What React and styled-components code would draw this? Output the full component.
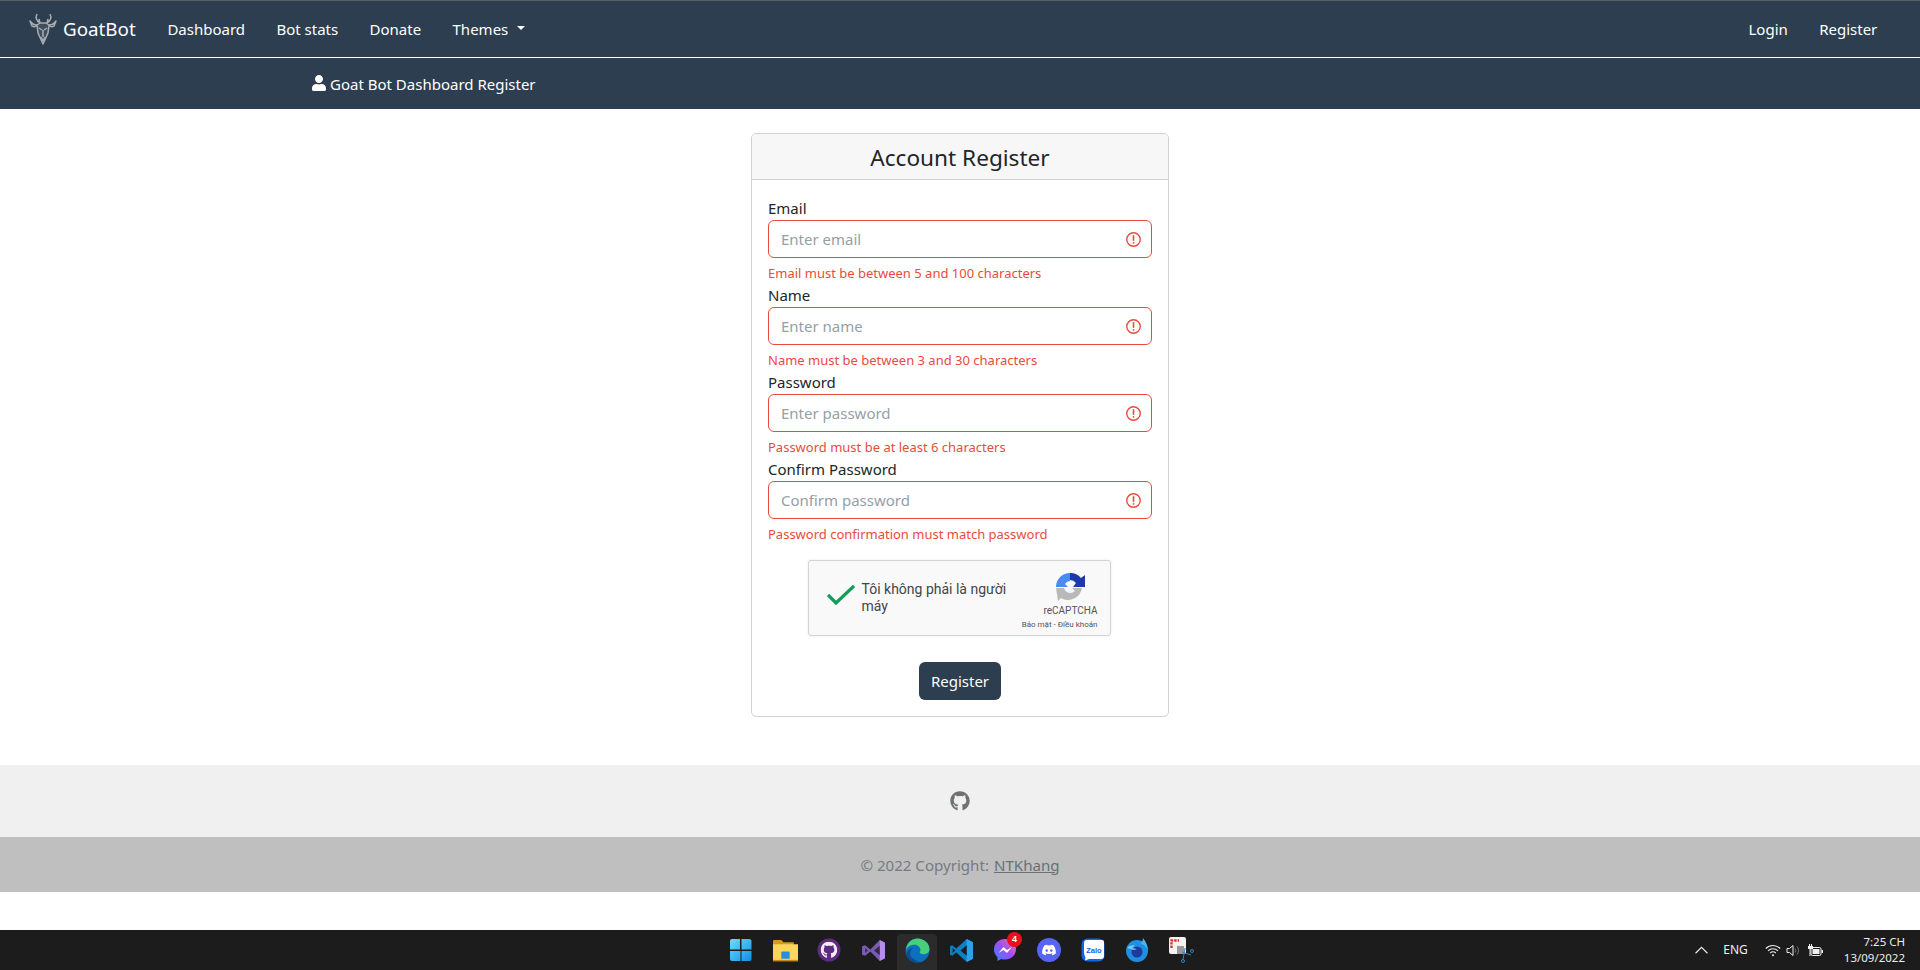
import React from 'react';
import styled, { createGlobalStyle } from 'styled-components';
import { FaUser, FaGithub, FaDiscord } from 'react-icons/fa';

const Global = createGlobalStyle`
  * { box-sizing: border-box; }
  html, body { margin: 0; padding: 0; background: #fff; }
  body { font-family: "Noto Sans", "Open Sans", sans-serif; font-size: 15px; line-height: 24px; color: #212529; }
`;

const Page = styled.div`display:flex;flex-direction:column;height:970px;overflow:hidden;`;
const Navbar = styled.nav`
  height:58px;background:#2c3e50;border-top:1px solid #5a5f63;border-bottom:1px solid #fff;
  display:flex;align-items:center;padding:0 27px 0 29px;color:#fff;
`;
const Brand = styled.a`display:flex;align-items:center;gap:6px;font-size:18.8px;margin-right:16px;`;
const NavLink = styled.a`padding:0 15.7px;color:#fff;white-space:nowrap;display:flex;align-items:center;`;
const Caret = styled.span`
  display:inline-block;margin-left:9px;border-top:4.8px solid #fff;border-left:4.8px solid transparent;border-right:4.8px solid transparent;margin-top:-3px;
`;
const Spacer = styled.div`flex:1;`;
const SubHeader = styled.header`
  height:51px;background:#2c3e50;color:#fff;display:flex;align-items:center;gap:4px;padding-left:312px;
  svg{width:14px;height:16px;margin-top:-2px;}
`;
const Main = styled.main`display:flex;justify-content:center;padding-top:24px;`;
const Card = styled.section`width:418px;border:1px solid #d2d2d2;border-radius:5px;height:584px;overflow:hidden;`;
const CardHeader = styled.h2`
  margin:0;height:46px;background:#f7f7f7;border-bottom:1px solid #d2d2d2;text-align:center;
  font-size:22.6px;font-weight:400;line-height:47px;color:#212529;
`;
const CardBody = styled.form`padding:16px;display:flex;flex-direction:column;`;
const Field = styled.div`display:flex;flex-direction:column;height:87px;`;
const Label = styled.label`height:24px;line-height:24px;`;
const InputWrap = styled.div`
  height:38px;border:1px solid #e74c3c;border-radius:6px;display:flex;align-items:center;justify-content:space-between;
  padding:0 10px 0 12px;color:#95a0a6;
`;
const Placeholder = styled.span``;
const Feedback = styled.div`margin-top:4px;height:21px;line-height:23px;font-size:13px;color:#e74c3c;`;
const Captcha = styled.div`
  align-self:center;margin:16px 0 0 -2px;width:303px;height:76px;background:#f9f9f9;border:1px solid #d3d3d3;border-radius:3px;
  box-shadow:0 0 3px rgba(0,0,0,.08);display:flex;font-family:Roboto,sans-serif;color:#444;
`;
const CaptchaCheck = styled.div`width:51px;padding:23px 0 0 18px;flex:none;`;
const CaptchaLabel = styled.div`width:170px;padding-top:20px;font-size:14px;line-height:17px;flex:none;margin-left:2px;`;
const CaptchaBrand = styled.div`flex:1;min-width:0;display:flex;flex-direction:column;align-items:flex-end;padding:10px 12px 0 0;`;
const LogoSlot = styled.div`margin-right:12px;height:31px;`;
const CaptchaName = styled.div`font-size:10px;line-height:12px;color:#555;margin-top:3px;`;
const CaptchaLinks = styled.div`font-size:8px;line-height:10px;color:#555;margin-top:3px;white-space:nowrap;`;
const SubmitRow = styled.div`display:flex;justify-content:center;margin-top:26px;`;
const Submit = styled.button`
  width:82px;height:38px;background:#2c3e50;color:#fff;border:0;border-radius:6px;font:inherit;padding:0;
`;
const Footer = styled.footer`margin-top:48px;`;
const Social = styled.div`height:72px;background:#f0f0f0;display:flex;align-items:center;justify-content:center;color:#6d7276;svg{width:20px;height:20px;}`;
const Copy = styled.div`height:55px;background:#bfbfbf;display:flex;align-items:center;justify-content:center;gap:5px;color:#757b80;font-size:15.1px;`;
const CopyLink = styled.a`color:#6a7075;text-decoration:underline;`;
const Taskbar = styled.div`
  margin-top:auto;height:40px;background:#1c1c1c;display:flex;align-items:center;position:relative;color:#fff;flex:none;
`;
const TaskIcons = styled.div`
  position:absolute;left:719px;top:0;height:40px;display:flex;
`;
const TaskIcon = styled.div`
  width:44px;height:40px;display:flex;align-items:center;justify-content:center;position:relative;
  ${p=>p.$active?`&::before{content:"";position:absolute;left:2px;right:2px;top:4px;bottom:0;background:#2b2b2b;border-radius:4px 4px 0 0;}`:''}
  svg{position:relative;}
`;
const Badge = styled.span`
  position:absolute;right:5px;top:2px;width:15px;height:15px;background:#e8101a;border-radius:50%;font:700 9px/15px "Liberation Sans",sans-serif;text-align:center;color:#fff;
`;
const Tray = styled.div`margin-left:auto;display:flex;align-items:center;padding-right:15px;font-family:"Noto Sans",sans-serif;font-size:11px;`;
const Lang = styled.span`margin:0 17px 0 15px;font-size:12px;color:#eee;`;
const TrayIcons = styled.div`display:flex;align-items:center;gap:5px;margin-right:21px;`;
const Clock = styled.div`text-align:right;line-height:16px;font-size:11.5px;color:#eee;`;

const GoatLogo = () => (
  <svg width="28" height="32" viewBox="0 0 28 32" fill="none" stroke="#a9adb1" strokeWidth="1.5" strokeLinejoin="round">
    <path d="M8 1c-2 4 0 7 3 9l-1-4M21 1c2 4 0 7-3 9l1-4" />
    <path d="M1 8c2 3 4 4 7 4-1 2-3 2-5 1zM27 8c-2 3-4 4-7 4 1 2 3 2 5 1z" />
    <path d="M8 12l3-2h6l3 2-1 8-5 11-5-11z" fill="#3f4f5f" />
    <path d="M10 15l3 2M18 15l-3 2M12 24l2 4 2-4M14 17v7" />
  </svg>
);
const Invalid = () => (
  <svg width="15" height="15" viewBox="0 0 12 12" fill="none" stroke="#e74c3c">
    <circle cx="6" cy="6" r="5.4" strokeWidth="1.1" />
    <path d="M6 3v3.600" strokeWidth="1.300" strokeLinecap="round" />
    <circle cx="6" cy="8.700" r=".7" fill="#e74c3c" stroke="none" />
  </svg>
);
const Check = () => (
  <svg width="28" height="21" viewBox="0 0 28 21" fill="none" stroke="#0f9d58" strokeWidth="3.200"><path d="M1 11l8 8L27 2" /></svg>
);
const RecaptchaLogo = () => (
  <svg width="31" height="31" viewBox="0 0 31 31" fill="none">
    <path d="M1 15A14 14 0 0 1 15 2v8a6 6 0 0 0-5 3l3 3H1z" fill="#4a8af4" />
    <path d="M15 2a14 14 0 0 1 11 5l4-3v12H18l3-4a8 8 0 0 0-6-3z" fill="#1c3aa9" />
    <path d="M1 17h8a7 7 0 0 0 6 5 7 7 0 0 0 5-2l-3-3h10A14 14 0 0 1 6 27L3 30z" fill="#b9b9b9" />
  </svg>
);

const Win = () => (
  <svg width="24" height="24" viewBox="0 0 24 24">
    <defs><linearGradient id="w" x1="0" y1="0" x2="1" y2="1"><stop offset="0" stopColor="#6fdcfb"/><stop offset="1" stopColor="#0f8ee6"/></linearGradient></defs>
    <path d="M1 3q0-2 2-2h8v10.500H1zM12.500 1h8q2 0 2 2v8.500H12.500zM1 13h10.500v10H3q-2 0-2-2zM12.500 13h10v8q0 2-2 2h-8z" fill="url(#w)"/>
  </svg>
);
const Folder = () => (
  <svg width="25" height="23" viewBox="0 0 24 22">
    <path d="M0 2q0-1 1-1h7l2 2h10v3H0z" fill="#d79a1c"/>
    <path d="M0 5h24v16H0z" fill="#f9d65c"/>
    <path d="M8 13q0-1 1-1h6q1 0 1 1v6H8z" fill="#2a8fd6"/>
    <path d="M0 20h24v1.500H0z" fill="#c68a18"/>
  </svg>
);
const GhIcon = () => (
  <svg width="24" height="24" viewBox="0 0 24 24"><circle cx="12" cy="12" r="11.500" fill="#5f2b80"/><FaGithub x="3.500" y="3.500" size="17" color="#f1eef5"/></svg>
);
const VS = () => (
  <svg width="25" height="25" viewBox="0 0 24 24"><path d="M1 8l3-1 5 4 9-9 5 2.500v15L18 22l-9-9-5 4-3-1z" fill="#7a5ab5"/><path d="M18 2l5 2.500v15L18 22z" fill="#b88fe8"/><path d="M4 9.500v5l2.500-2.500zM18 7.500L12.500 12l5.500 4.500z" fill="#1c1c1c" opacity=".75"/></svg>
);
const Edge = () => (
  <svg width="25" height="25" viewBox="0 0 24 24">
    <circle cx="12" cy="12" r="11.500" fill="#0c70bf"/>
    <path d="M1 11C2 4 7 .5 12 .5c6.500 0 11.500 5 11.500 10 0 3.500-3 5-6 5-2 0-3.500-.8-3.500-1.500 0-.5.800-.8.800-2.500 0-3-3-5-6-5-3.500 0-6 2-7.800 4.500z" fill="#47cf7b"/>
    <path d="M8 20c-4-2-4-8 0-10.500-3.500 0-6.500 3-6.500 6 0 4 4 8 10 8 1 0 2-.2 3-.5-2.500 0-4.500-1.500-6.500-3z" fill="#0a4d92"/>
  </svg>
);
const VSCode = () => (
  <svg width="25" height="25" viewBox="0 0 24 24"><path d="M17 1l6 3v16l-6 3L7 14l-4 3-2-1V8l2-1 4 3z" fill="#0f7fc4"/><path d="M17 1l6 3v16l-6 3z" fill="#2aa3ec"/><path d="M17 7l-6 5 6 5zM3.500 9.500v5L6 12z" fill="#1c1c1c"/></svg>
);
const Messenger = () => (
  <svg width="24" height="24" viewBox="0 0 24 24">
    <defs><linearGradient id="m" x1="0" y1="1" x2="1" y2="0"><stop offset="0" stopColor="#2f8cff"/><stop offset=".5" stopColor="#9a4dff"/><stop offset="1" stopColor="#ff6a8a"/></linearGradient></defs>
    <path d="M12 1C5.500 1 1 5.500 1 11.500c0 3 1.300 5.700 3.500 7.500v4l3.700-2c1.200.4 2.500.5 3.800.5 6.500 0 11-4.500 11-10.500S18.500 1 12 1z" fill="url(#m)"/>
    <path d="M5.500 15l5-6 3.500 3 5-3-5 6-3.500-3z" fill="#fff"/>
  </svg>
);
const Disc = () => (
  <svg width="24" height="24" viewBox="0 0 24 24"><circle cx="12" cy="12" r="12" fill="#5865f2"/><FaDiscord x="4.500" y="4.500" size="15" color="#fff"/></svg>
);
const Zalo = () => (
  <svg width="24" height="24" viewBox="0 0 24 24"><rect x=".5" y=".5" width="23" height="23" rx="6" fill="#0a68e8"/><path d="M3 5q0-3 3-3h15q2 0 2 2v14q0 3-3 3H8l-4 1.500.5-3Q3 17 3 14z" fill="#fff"/><text x="13" y="14.500" textAnchor="middle" fontSize="7.500" fontWeight="700" fontFamily="Liberation Sans, sans-serif" fill="#0a68e8">Zalo</text></svg>
);
const Firefox = () => (
  <svg width="24" height="26" viewBox="0 0 24 26">
    <circle cx="12" cy="14" r="11" fill="#1f8fe0"/>
    <path d="M23 14c0-4-1.500-9-5-13 0 3-1 4-2.500 5.500 3 1 6.500 3 7.500 7.500z" fill="#4bb4f2"/>
    <circle cx="12" cy="15" r="5.500" fill="#1d3a9e"/>
    <path d="M2 11c2-2 5-3 8-2.500L7 11l5 1-3 1z" fill="#7cc9f8"/>
  </svg>
);
const Snip = () => (
  <svg width="26" height="26" viewBox="0 0 26 26">
    <rect x="1" y="0" width="17" height="17" rx="2" fill="#f3f3f3"/>
    <path d="M3.500 11V3.500H11" fill="none" stroke="#d8372a" strokeWidth="2.400" strokeDasharray="2.400 1"/>
    <path d="M9 9h7v8H9z" fill="#9a9a9a"/>
    <path d="M14 15l9 3M17 11l-2 12" stroke="#2e86c8" strokeWidth="1"/>
    <circle cx="24" cy="14" r="1.500" fill="none" stroke="#2e86c8"/>
    <circle cx="15" cy="24" r="1.500" fill="none" stroke="#2e86c8"/>
  </svg>
);
const Chevron = () => (<svg width="13" height="8" viewBox="0 0 12 7" fill="none" stroke="#eee"><path d="M.5 6.500L6 1l5.500 5.500"/></svg>);
const Wifi = () => (
  <svg width="16" height="13" viewBox="0 0 16 13" fill="none" stroke="#eee" strokeWidth="1.100"><path d="M.8 4.500a10 10 0 0 1 14.400 0M3 6.800a7 7 0 0 1 10 0M5.200 9a4 4 0 0 1 5.600 0"/><circle cx="8" cy="11.300" r="1" fill="#eee" stroke="none"/></svg>
);
const Speaker = () => (
  <svg width="16" height="13" viewBox="0 0 16 13" fill="none" stroke="#eee"><path d="M1 4.500h2.500L7 1.500v10l-3.500-3H1z"/><path d="M9 4.500a3 3 0 0 1 0 4M11 2.500a6 6 0 0 1 0 8" stroke="#777"/></svg>
);
const Battery = () => (
  <svg width="16" height="13" viewBox="0 0 16 13" fill="#eee"><path d="M2 0h1v2h1V0h1v2h1v3H1V2h1z"/><rect x="4" y="3.500" width="10" height="8" rx="1.500" fill="none" stroke="#eee"/><rect x="5.500" y="5" width="7" height="5"/><rect x="14.500" y="6" width="1.500" height="3"/><rect x="2.500" y="5" width="1" height="7"/></svg>
);

const fields = [
  ['Email', 'Enter email', 'Email must be between 5 and 100 characters'],
  ['Name', 'Enter name', 'Name must be between 3 and 30 characters'],
  ['Password', 'Enter password', 'Password must be at least 6 characters'],
  ['Confirm Password', 'Confirm password', 'Password confirmation must match password'],
];
const taskIcons = [Win, Folder, GhIcon, VS, Edge, VSCode, Messenger, Disc, Zalo, Firefox, Snip];

export default function App() {
  return (
    <Page>
      <Global />
      <Navbar>
        <Brand><GoatLogo />GoatBot</Brand>
        <NavLink>Dashboard</NavLink>
        <NavLink>Bot stats</NavLink>
        <NavLink>Donate</NavLink>
        <NavLink>Themes<Caret /></NavLink>
        <Spacer />
        <NavLink>Login</NavLink>
        <NavLink>Register</NavLink>
      </Navbar>
      <SubHeader><FaUser />Goat Bot Dashboard Register</SubHeader>
      <Main>
        <Card>
          <CardHeader>Account Register</CardHeader>
          <CardBody>
            {fields.map(([l, p, e]) => (
              <Field key={l}>
                <Label>{l}</Label>
                <InputWrap><Placeholder>{p}</Placeholder><Invalid /></InputWrap>
                <Feedback>{e}</Feedback>
              </Field>
            ))}
            <Captcha>
              <CaptchaCheck><Check /></CaptchaCheck>
              <CaptchaLabel>Tôi không phải là người máy</CaptchaLabel>
              <CaptchaBrand>
                <LogoSlot><RecaptchaLogo /></LogoSlot>
                <CaptchaName>reCAPTCHA</CaptchaName>
                <CaptchaLinks>Bảo mật - Điều khoản</CaptchaLinks>
              </CaptchaBrand>
            </Captcha>
            <SubmitRow><Submit type="button">Register</Submit></SubmitRow>
          </CardBody>
        </Card>
      </Main>
      <Footer>
        <Social><FaGithub /></Social>
        <Copy>© 2022 Copyright: <CopyLink>NTKhang</CopyLink></Copy>
      </Footer>
      <Taskbar>
        <TaskIcons>
          {taskIcons.map((I, i) => (
            <TaskIcon key={i} $active={i === 4}><I />{i === 6 && <Badge>4</Badge>}</TaskIcon>
          ))}
        </TaskIcons>
        <Tray>
          <Chevron />
          <Lang>ENG</Lang>
          <TrayIcons><Wifi /><Speaker /><Battery /></TrayIcons>
          <Clock>7:25 CH<br />13/09/2022</Clock>
        </Tray>
      </Taskbar>
    </Page>
  );
}
